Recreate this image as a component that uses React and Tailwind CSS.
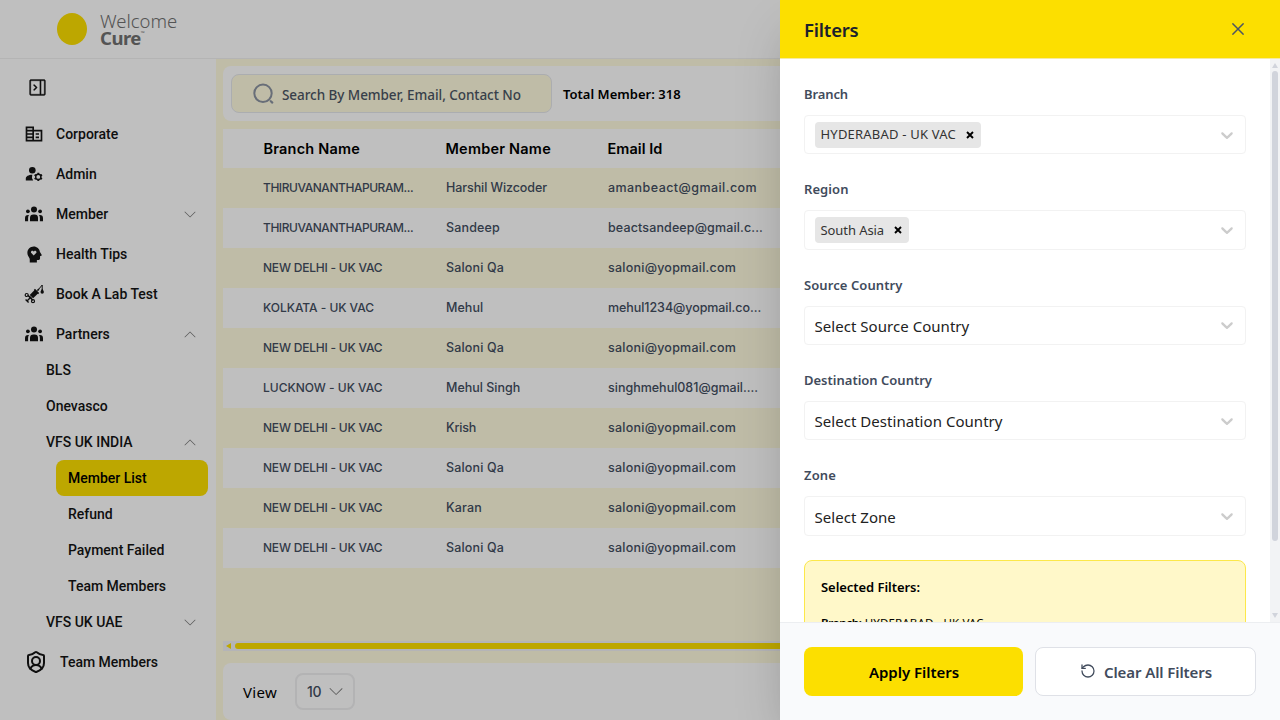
import { MdOutlineCorporateFare } from "react-icons/md";
import { RiMentalHealthFill } from "react-icons/ri";
import { GoSidebarCollapse } from "react-icons/go";
import { SlArrowDown, SlArrowUp } from "react-icons/sl";
import { ShieldUser, RotateCcw } from "lucide-react";

function PeopleIcon() {
  return (
    <svg viewBox="0 0 18 16" className="h-4 w-[18px]" fill="currentColor">
      <circle cx="9" cy="3.4" r="3" />
      <circle cx="2.9" cy="5.3" r="1.9" />
      <circle cx="15.1" cy="5.3" r="1.9" />
      <path d="M5 15.3v-3.5a3.4 3.4 0 0 1 3.4-3.4h1.2a3.4 3.4 0 0 1 3.4 3.400v3.500z" />
      <path d="M0 15.3v-3.100a3.100 3.100 0 0 1 3.100-3.100h.9a5 5 0 0 0-.9 2.800v3.400zM18 15.300v-3.100a3.100 3.100 0 0 0-3.100-3.100h-.9a5 5 0 0 1 .9 2.800v3.400z" />
    </svg>
  );
}

function AdminIcon() {
  return (
    <svg viewBox="0 0 18 16" className="h-4 w-[18px]" fill="none" stroke="currentColor">
      <circle cx="7.3" cy="4.2" r="3.3" fill="currentColor" stroke="none" />
      <path d="M.8 14.4v-1.8c0-2.4 2.6-3.8 6.5-3.9a6 6 0 0 0 .9 5.7z" fill="currentColor" stroke="none" />
      <circle cx="13.3" cy="10.9" r="2.6" strokeWidth="1.4" />
      <path
        d="M13.3 8.3V6.7M13.3 15.1v-1.6M15.6 9.6l1.4-.8M9.6 13l1.4-.8M15.6 12.2l1.4.8M9.6 8.8l1.4.8"
        strokeWidth="1.9"
      />
    </svg>
  );
}

function SyringeIcon() {
  return (
    <svg viewBox="0 0 20 20" className="h-5 w-5" fill="none" stroke="currentColor">
      <path d="M7.4 12.6l5.400-5.400" strokeWidth="4.8" />
      <path d="M5.2 12.2l2.6 2.6" strokeWidth="1.6" />
      <path d="M10.400 5.400l4.200 4.200M13.4 6.6l1.600-1.600" strokeWidth="1.5" />
      <path d="M14.4 5.6L18.2 1v6" strokeWidth="1" />
      <path d="M18.2 4.800c1.100 1.700 1.700 2.400 1.700 3.300a1.700 1.700 0 0 1-3.400 0c0-.9.6-1.600 1.700-3.300z" fill="currentColor" stroke="none" />
      <path d="M3.8 11.2l5 5M6 14l-3 3M1.600 15.600l3 3" strokeWidth="1.4" />
      <circle cx="2.7" cy="11" r="1.500" strokeWidth="1.200" />
      <circle cx="9" cy="17.2" r="1.500" strokeWidth="1.200" />
    </svg>
  );
}

function SearchIcon() {
  return (
    <svg viewBox="0 0 24 24" className="h-6 w-6 text-[#8b93a1]" fill="none" stroke="currentColor" strokeWidth="2" strokeLinecap="round">
      <circle cx="11" cy="11.3" r="8.7" />
      <path d="M18.800 19.200l1.500 1.400" strokeWidth="2.2" />
    </svg>
  );
}

function SelectChevron() {
  return (
    <svg viewBox="0 0 20 20" className="h-5 w-5 text-[#cccccc]" fill="currentColor">
      <path d="M4.516 7.548c0.436-0.446 1.043-0.481 1.576 0l3.908 3.747 3.908-3.747c0.533-0.481 1.141-0.446 1.574 0 0.436 0.445 0.408 1.197 0 1.615-0.406 0.418-4.695 4.502-4.695 4.502-0.217 0.223-0.502 0.335-0.787 0.335s-0.570-0.112-0.789-0.335c0 0-4.287-4.084-4.695-4.502s-0.436-1.170 0-1.615z" />
    </svg>
  );
}

function NavItem({ icon, label, arrow }) {
  return (
    <div className="flex h-10 items-center pl-6 pr-5">
      <span className="flex w-5 items-center justify-center">{icon}</span>
      <span className="ml-3 flex-1">{label}</span>
      {arrow}
    </div>
  );
}

const down = <SlArrowDown className="h-[11px] w-3 text-[#777777]" />;
const up = <SlArrowUp className="h-[11px] w-3 text-[#777777]" />;

function Sidebar() {
  return (
    <aside className="w-[216px] shrink-0 bg-white font-['Roboto',sans-serif] text-sm font-medium text-[#141414]">
      <div className="flex h-[55px] items-center pl-7 pt-px">
        <GoSidebarCollapse className="h-[19px] w-[19px]" strokeWidth={0.5} />
      </div>
      <NavItem icon={<MdOutlineCorporateFare className="h-5 w-5" />} label="Corporate" />
      <NavItem icon={<AdminIcon />} label="Admin" />
      <NavItem icon={<PeopleIcon />} label="Member" arrow={down} />
      <NavItem icon={<RiMentalHealthFill className="h-[19px] w-[19px]" />} label="Health Tips" />
      <NavItem icon={<SyringeIcon />} label="Book A Lab Test" />
      <NavItem icon={<PeopleIcon />} label="Partners" arrow={up} />
      <div className="flex h-8 items-center pl-[46px]">BLS</div>
      <div className="mt-1 flex h-8 items-center pl-[46px]">Onevasco</div>
      <div className="mt-1 flex h-8 items-center justify-between pl-[46px] pr-5">VFS UK INDIA{up}</div>
      <div className="ml-14 mr-2 mt-0.5">
        <div className="flex h-9 items-center rounded-lg bg-[#fcdf00] pl-3 text-black">Member List</div>
        <div className="flex h-9 items-center pl-3">Refund</div>
        <div className="flex h-9 items-center pl-3">Payment Failed</div>
        <div className="flex h-9 items-center pl-3">Team Members</div>
      </div>
      <div className="flex h-9 items-center justify-between pl-[46px] pr-5">VFS UK UAE{down}</div>
      <div className="mt-0.5 flex h-10 items-center pl-6">
        <ShieldUser className="h-6 w-6" strokeWidth={2} />
        <span className="ml-3">Team Members</span>
      </div>
    </aside>
  );
}

const rows = [
  ["THIRUVANANTHAPURAM...", "tracking-[-0.45px]", "Harshil Wizcoder", "tracking-[-0.08px]", "amanbeact@gmail.com", "tracking-[0.44px]"],
  ["THIRUVANANTHAPURAM...", "tracking-[-0.45px]", "Sandeep", "tracking-[0.17px]", "beactsandeep@gmail.c...", "tracking-[0.13px]"],
  ["NEW DELHI - UK VAC", "tracking-[-0.21px]", "Saloni Qa", "tracking-[0.16px]", "saloni@yopmail.com", "tracking-[0.24px]"],
  ["KOLKATA - UK VAC", "tracking-[-0.04px]", "Mehul", "tracking-[0.05px]", "mehul1234@yopmail.co...", "tracking-[-0.06px]"],
  ["NEW DELHI - UK VAC", "tracking-[-0.21px]", "Saloni Qa", "tracking-[0.16px]", "saloni@yopmail.com", "tracking-[0.24px]"],
  ["LUCKNOW - UK VAC", "tracking-[-0.01px]", "Mehul Singh", "tracking-normal", "singhmehul081@gmail....", "tracking-normal"],
  ["NEW DELHI - UK VAC", "tracking-[-0.21px]", "Krish", "tracking-[-0.2px]", "saloni@yopmail.com", "tracking-[0.24px]"],
  ["NEW DELHI - UK VAC", "tracking-[-0.21px]", "Saloni Qa", "tracking-[0.16px]", "saloni@yopmail.com", "tracking-[0.24px]"],
  ["NEW DELHI - UK VAC", "tracking-[-0.21px]", "Karan", "tracking-[0.18px]", "saloni@yopmail.com", "tracking-[0.24px]"],
  ["NEW DELHI - UK VAC", "tracking-[-0.21px]", "Saloni Qa", "tracking-[0.16px]", "saloni@yopmail.com", "tracking-[0.24px]"],
];

function Content() {
  return (
    <main className="flex min-w-0 flex-1 flex-col bg-[#fffbdf] pl-[7px] pt-[7px]">
      <div className="flex h-[55px] shrink-0 items-center rounded-l-lg bg-white pl-2">
        <div className="flex h-[39px] w-[321px] items-center rounded-lg border border-[#e5e7eb] bg-[#fffbdf] pl-5 font-['Noto_Sans',sans-serif] text-[13.5px] font-medium tracking-[-0.06px] text-[#4b5563]">
          <SearchIcon />
          <span className="ml-1.5 mt-1">Search By Member, Email, Contact No</span>
        </div>
        <span className="ml-[11px] mt-0.5 font-['Noto_Sans',sans-serif] text-[13px] font-semibold tracking-[0.02px] text-black">Total Member: 318</span>
      </div>
      <div className="mt-2 flex flex-1 flex-col font-['Inter',sans-serif] text-[12.5px] font-medium text-[#434e5f]">
        <div className="grid h-[39px] grid-cols-[182px_162px_1fr] items-center bg-white pl-[40.5px] text-[14.5px] font-semibold text-black">
          <span className="tracking-[0.19px]">Branch Name</span>
          <span className="tracking-[0.22px]">Member Name</span>
          <span className="tracking-[0.06px]">Email Id</span>
        </div>
        {rows.map((r, i) => (
          <div key={i} className="grid h-10 grid-cols-[183px_162px_1fr] items-center pl-10 odd:bg-white">
            <span className={"text-xs " + r[1]}>{r[0]}</span>
            <span className={r[3]}>{r[2]}</span>
            <span className={r[5]}>{r[4]}</span>
          </div>
        ))}
        <div className="mt-auto flex h-2.5 items-center bg-[#f0f1f5] pl-[3px]">
          <svg viewBox="0 0 5 6" className="h-1.5 w-[5px] shrink-0">
            <path d="M5 0v6L0 3z" fill="#fcdf00" />
          </svg>
          <div className="ml-1 h-1.5 flex-1 rounded-l-full bg-[#fcdf00]" />
        </div>
      </div>
      <div className="mt-3 flex h-[57px] shrink-0 items-center rounded-lg bg-white pl-5">
        <span className="mt-px w-[52px] font-['Noto_Sans',sans-serif] text-[15px] tracking-[0.29px] text-black">View</span>
        <div className="flex h-[37px] w-[60px] items-center justify-between rounded-lg border-2 border-[#efeff0] px-2.5 font-['Inter',sans-serif] text-sm font-medium tracking-[-0.43px] text-[#434e5f]">
          10
          <SlArrowDown className="h-[13px] w-3.5 text-[#777777]" />
        </div>
      </div>
    </main>
  );
}

const fields = [
  { label: "Branch", labelTrack: "tracking-[-0.1px]", tag: "HYDERABAD - UK VAC", track: "tracking-[0.21px]" },
  { label: "Region", labelTrack: "tracking-[0.07px]", tag: "South Asia", track: "tracking-[-0.08px]" },
  { label: "Source Country", labelTrack: "tracking-[0.08px]", placeholder: "Select Source Country" },
  { label: "Destination Country", labelTrack: "tracking-normal", placeholder: "Select Destination Country" },
  { label: "Zone", labelTrack: "tracking-[0.14px]", placeholder: "Select Zone" },
];

function Field({ label, labelTrack, tag, track, placeholder }) {
  return (
    <div className="flex h-[71.33px] shrink-0 flex-col">
      <div className={"mb-3 h-5 pt-px text-[13px] font-semibold leading-5 text-[#414b5c] " + labelTrack}>{label}</div>
      <div className="flex flex-1 items-center justify-between rounded border border-[#f2f2f2] pl-[9.5px] pr-2">
        {tag ? (
          <div className="flex h-[26px] items-center rounded-sm bg-[#e6e6e6] pl-1.5 pr-[7px] text-[13px] text-[#333333]">
            <span className={"mt-px " + track}>{tag}</span>
            <svg viewBox="0 0 8 8" className="ml-[9.5px] h-2 w-2" stroke="#000000" strokeWidth="1.9">
              <path d="M1 1l6 6M7 1l-6 6" />
            </svg>
          </div>
        ) : (
          <span className="mt-0.5 text-[15px] tracking-[0.04px] text-[#222222]">{placeholder}</span>
        )}
        <SelectChevron />
      </div>
    </div>
  );
}

function FilterDrawer() {
  return (
    <section className="absolute inset-y-0 right-0 flex w-[500px] flex-col bg-white font-['Noto_Sans',sans-serif] shadow-2xl">
      <header className="flex h-[59px] shrink-0 items-center justify-between border-b border-[#f5eba0] bg-[#fcdf00] px-6">
        <h2 className="mt-0.5 text-[18.5px] font-semibold tracking-[-0.2px] text-[#1b212c]">Filters</h2>
        <svg viewBox="0 0 12 12" className="mr-3 h-3 w-3" fill="none" stroke="#4b5563" strokeWidth="1.5">
          <path d="M.4.4l11.2 11.2M11.6.4L.4 11.6" />
        </svg>
      </header>
      <div className="flex min-h-0 flex-1">
        <div className="flex min-w-0 flex-1 flex-col gap-6 overflow-hidden px-6 pt-6">
          {fields.map((f) => (
            <Field key={f.label} {...f} />
          ))}
          <div className="h-[130px] shrink-0 rounded-lg border border-[#fce84a] bg-[#fff8c9] px-4 pt-4 text-black">
            <h3 className="text-[13px] font-semibold leading-5 tracking-[-0.05px]">Selected Filters:</h3>
            <p className="mt-4 text-[11.5px] leading-5 tracking-[0.13px]">
              <strong className="font-semibold tracking-[-0.3px]">Branch:</strong> HYDERABAD - UK VAC
            </p>
          </div>
        </div>
        <div className="flex w-2.5 flex-col items-center bg-[#f2f3f5] py-1">
          <svg viewBox="0 0 6 5" width="6" height="5">
            <path d="M3 0l3 5H0z" fill="#d1d4dc" />
          </svg>
          <div className="mt-[3px] h-[470px] w-1.5 rounded-full bg-[#d1d4dc]" />
          <svg viewBox="0 0 6 5" width="6" height="5" className="mt-auto">
            <path d="M3 5l3-5H0z" fill="#d1d4dc" />
          </svg>
        </div>
      </div>
      <footer className="flex h-[98px] shrink-0 gap-3 border-t border-[#eceef1] bg-[#f9fafc] px-6 py-6 text-[15px] font-semibold">
        <button className="h-[49px] w-[219px] rounded-lg bg-[#fcdf00] pl-px pt-0.5 tracking-[-0.04px] text-black">Apply Filters</button>
        <button className="flex h-[49px] w-[221px] items-center justify-center gap-2 rounded-lg border border-[#dfe1e7] bg-white pl-px tracking-[-0.09px] text-[#414b5c]">
          <RotateCcw className="-mt-0.5 h-4 w-4" strokeWidth={1.9} />
          <span className="mt-0.5">Clear All Filters</span>
        </button>
      </footer>
    </section>
  );
}

export default function App() {
  return (
    <div className="relative flex h-[720px] w-[1280px] flex-col overflow-hidden bg-white">
      <header className="flex h-[59px] shrink-0 items-center border-b border-[#f0f0f0] bg-white pl-[57px]">
        <div className="-mt-px h-8 w-[30px] rounded-[50%] bg-[#fcdf00]" />
        <div className="ml-[13px] flex flex-col text-[#707070]">
          <span className="font-['Noto_Sans',sans-serif] text-[18.5px] font-light leading-[17px]">Welcome</span>
          <span className="font-['Noto_Sans',sans-serif] text-[18.5px] font-bold leading-[17px] tracking-[-0.5px]">
            Cure<sup className="align-super text-[5px] font-normal leading-none">™</sup>
          </span>
        </div>
      </header>
      <div className="flex min-h-0 flex-1">
        <Sidebar />
        <Content />
      </div>
      <div className="absolute inset-0 bg-black/25" />
      <FilterDrawer />
    </div>
  );
}
